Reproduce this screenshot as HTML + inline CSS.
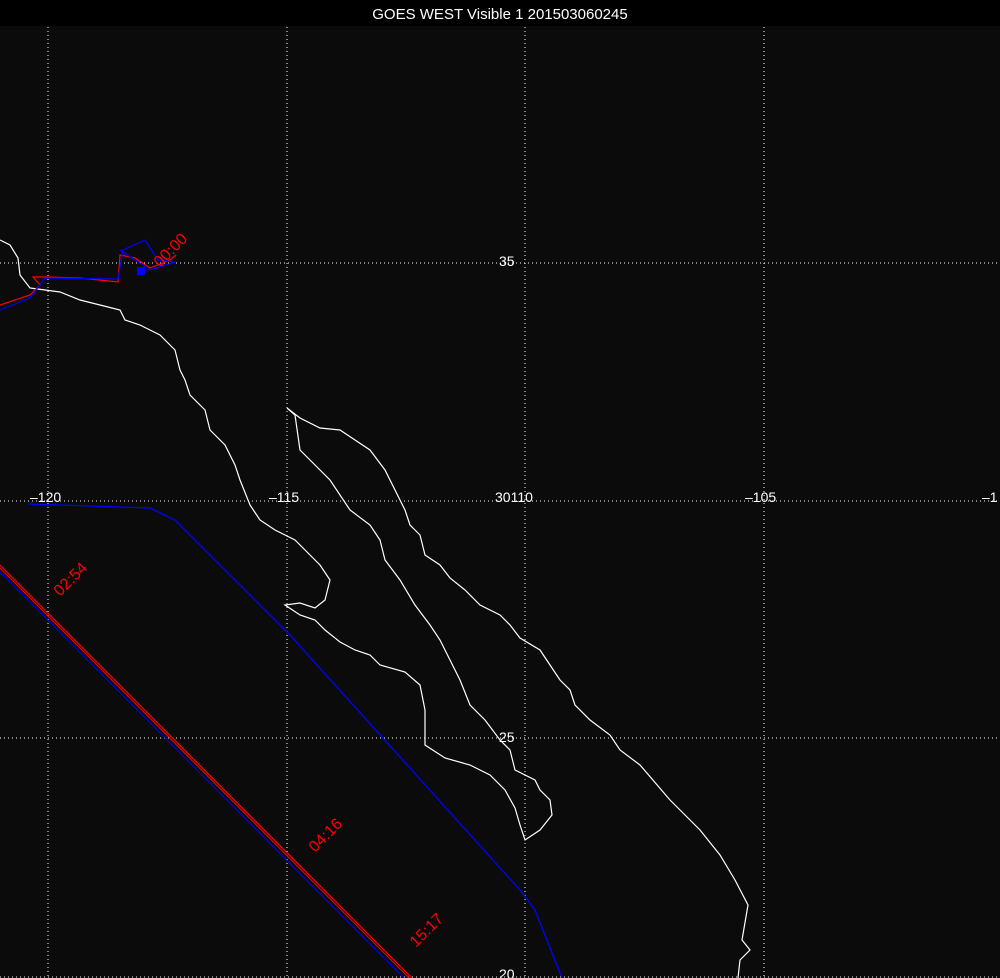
<!DOCTYPE html>
<html><head><meta charset="utf-8"><style>
html,body{margin:0;padding:0;background:#000;}
svg{display:block}
text{font-family:"Liberation Sans",sans-serif;}
</style></head><body>
<svg width="1000" height="978" viewBox="0 0 1000 978" xmlns="http://www.w3.org/2000/svg">
<rect x="0" y="0" width="1000" height="978" fill="#0b0b0b"/>
<rect x="0" y="0" width="1000" height="26" fill="#000"/>
<text x="500" y="19" fill="#fff" font-size="15" text-anchor="middle" font-family="Liberation Sans, sans-serif">GOES WEST Visible 1 201503060245</text>
<g stroke="#fff" stroke-width="1" stroke-dasharray="1,3" fill="none">
<line x1="48" y1="27" x2="48" y2="978"/>
<line x1="287" y1="27" x2="287" y2="978"/>
<line x1="525" y1="27" x2="525" y2="978"/>
<line x1="764" y1="27" x2="764" y2="978"/>
<line x1="0" y1="263" x2="1000" y2="263"/>
<line x1="0" y1="501" x2="1000" y2="501"/>
<line x1="0" y1="738" x2="1000" y2="738"/>
<line x1="0" y1="977" x2="1000" y2="977"/>
</g>
<g fill="#fff" font-size="14">
<text x="499" y="266">35</text>
<text x="499" y="742">25</text>
<text x="499" y="979">20</text>
<text x="30" y="502">–120</text>
<text x="269" y="502">–115</text>
<text x="495" y="502">30110</text>
<text x="745" y="502">–105</text>
<text x="982" y="502">–1</text>
</g>
<polyline fill="none" stroke="#fff" stroke-width="1.2" points="0,240 10,245 18,258 20,275 30,288 45,290 60,292 80,300 100,305 120,310 125,320 140,325 160,335 175,350 180,370 185,380 190,395 205,410 210,430 225,445 235,465 240,480 250,505 260,520 275,530 295,540 310,555 320,565 330,580 325,600 315,608 300,603 285,605 300,615 315,620 325,630 340,642 355,650 370,655 380,665 405,672 420,685 425,710 425,745 445,758 470,765 490,775 505,790 515,808 520,825 525,840 540,830 552,815 550,800 540,790 535,780 515,770 510,750 500,740 485,720 470,705 460,680 450,660 440,640 430,625 415,605 400,580 385,560 380,540 370,525 350,510 330,480 300,450 295,415 287,408 300,418 320,428 340,430 355,440 370,450 385,470 395,490 405,510 410,525 420,535 425,555 440,565 450,578 465,590 480,605 500,615 510,625 520,638 540,650 550,665 560,680 570,690 575,705 590,720 610,735 620,750 640,765 670,800 700,830 720,855 735,880 748,905 742,940 750,950 740,960 738,978"/>
<polyline fill="none" stroke="#00f" stroke-width="1.3" points="28,504 150,508 175,520 290,635 520,890 535,910 562,978"/>
<line x1="0" y1="565" x2="412" y2="978" stroke="#f00" stroke-width="1.2"/>
<line x1="0" y1="568" x2="409" y2="978" stroke="#f00" stroke-width="1"/>
<line x1="0" y1="572" x2="404" y2="978" stroke="#00f" stroke-width="1"/>
<g fill="none" stroke-width="1.2">
<polyline stroke="#f00" points="0,305 30,295 40,285 33,277 48,277 80,278 118,282 120,255 135,258 150,268 170,260 176,255"/>
<polyline stroke="#00f" points="0,310 30,298 45,278 118,279 123,250 145,240 158,260 175,262 150,270 120,250"/>
</g>
<rect x="137" y="267" width="8" height="8" fill="#00f"/>
<g fill="#f00" font-size="16">
<text transform="translate(160,268) rotate(-45)">00:00</text>
<text transform="translate(60,597) rotate(-45)">02:54</text>
<text transform="translate(315,853) rotate(-45)">04:16</text>
<text transform="translate(416,948) rotate(-45)">15:17</text>
</g>
</svg>
</body></html>
